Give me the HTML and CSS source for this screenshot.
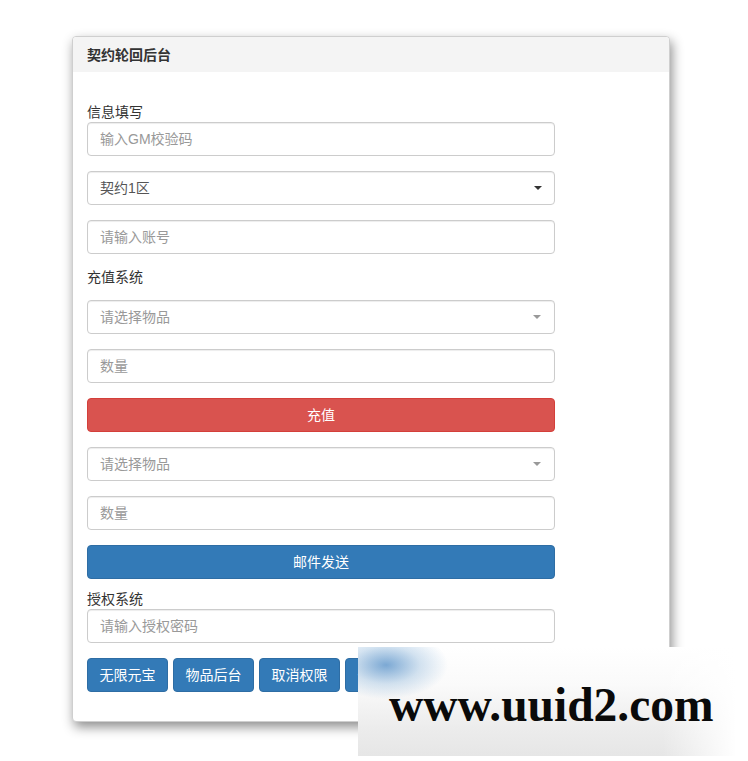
FILE: index.html
```html
<!DOCTYPE html>
<html lang="zh-CN">
<head>
<meta charset="utf-8">
<title>契约轮回后台</title>
<link rel="stylesheet" href="styles.css">
</head>
<body>
<div class="page">
  <div class="panel">
    <div class="panel-heading">契约轮回后台</div>
    <div class="panel-body">
      <form class="form">
        <div class="label">信息填写</div>
        <input class="control" type="text" placeholder="输入GM校验码">
        <div class="control select">
          <span class="value">契约1区</span>
          <span class="caret dark"></span>
        </div>
        <input class="control" type="text" placeholder="请输入账号">

        <div class="label sec">充值系统</div>
        <div class="control select">
          <span class="ph">请选择物品</span>
          <span class="caret light"></span>
        </div>
        <input class="control" type="text" placeholder="数量">
        <button type="button" class="btn btn-block btn-danger">充值</button>
        <div class="control select">
          <span class="ph">请选择物品</span>
          <span class="caret light"></span>
        </div>
        <input class="control" type="text" placeholder="数量">
        <button type="button" class="btn btn-block btn-primary">邮件发送</button>

        <div class="label sec3">授权系统</div>
        <input class="control" type="text" placeholder="请输入授权密码">
        <div class="btn-row">
          <button type="button" class="btn btn-primary">无限元宝</button>
          <button type="button" class="btn btn-primary">物品后台</button>
          <button type="button" class="btn btn-primary">取消权限</button>
          <button type="button" class="btn btn-primary">一键清理</button>
        </div>
      </form>
    </div>
  </div>
  <div class="watermark"><span>www.uuid2.com</span></div>
</div>
</body>
</html>
```

FILE: styles.css
```css
* { box-sizing: border-box; }
html, body { margin: 0; padding: 0; background: #fff; }
body {
  font-family: "Liberation Sans", "Noto Sans CJK SC", sans-serif;
  font-size: 14px;
  color: #333;
}
.page {
  position: relative;
  width: 748px;
  height: 761px;
  padding: 36px 0 0 72px;
}
.panel {
  width: 598px;
  background: #fff;
  border: 1px solid #cfcfcf;
  border-radius: 4px;
  box-shadow: 2px 5px 12px rgba(0, 0, 0, 0.45);
}
.panel-heading {
  height: 35px;
  display: flex;
  align-items: center;
  padding: 0 15px 1px 14px;
  background: #f4f4f4;
  font-weight: bold;
  font-size: 14px;
  color: #333;
  border-radius: 3px 3px 0 0;
}
.panel-body {
  padding: 15px 15px 15px 14px;
}
.form {
  width: 468px;
  padding-top: 15px;
  margin: 0;
}
.label {
  line-height: 20px;
  height: 20px;
  font-size: 14px;
  color: #333;
}
.label.sec { margin-top: -2px; margin-bottom: 13px; }
.label.sec3 { margin-top: -5px; }
.control {
  display: block;
  width: 100%;
  height: 34px;
  margin: 0 0 15px 0;
  padding: 6px 12px;
  font: inherit;
  font-size: 14px;
  line-height: 20px;
  color: #555;
  background: #fff;
  border: 1px solid #ccc;
  border-radius: 4px;
  box-shadow: inset 0 1px 1px rgba(0, 0, 0, 0.075);
  outline: none;
}
.control::placeholder { color: #999; }
.select {
  display: flex;
  align-items: center;
  justify-content: space-between;
  padding-right: 12px;
}
.select .ph { color: #999; }
.select .value { color: #555; }
.caret {
  width: 0;
  height: 0;
  border-left: 4px solid transparent;
  border-right: 4px solid transparent;
}
.caret.dark { border-top: 4px solid #333; margin-right: 0; }
.caret.light { border-top: 4px solid #999; margin-right: 1px; }
.btn {
  display: inline-block;
  height: 34px;
  padding: 6px 12px;
  font: inherit;
  font-size: 14px;
  line-height: 20px;
  color: #fff;
  border: 1px solid transparent;
  border-radius: 4px;
  text-align: center;
  white-space: nowrap;
  cursor: pointer;
}
.btn-block {
  display: block;
  width: 100%;
  margin-bottom: 15px;
}
.btn-row .btn { padding: 6px 11px; width: 81px; }
.btn-danger { background: #d9534f; border-color: #d43f3a; }
.btn-primary { background: #337ab7; border-color: #2e6da4; }
.btn-row {
  display: flex;
  gap: 5px;
  margin-bottom: 14px;
}
.watermark {
  position: absolute;
  left: 358px;
  top: 647px;
  width: 390px;
  height: 109px;
  background:
    radial-gradient(ellipse 62px 34px at 28px 18px, rgba(80, 140, 198, 0.75), rgba(130, 175, 215, 0.35) 55%, rgba(255, 255, 255, 0) 100%),
    linear-gradient(to right, rgba(255, 255, 255, 0) 0%, rgba(255, 255, 255, 0) 78%, #fff 97%),
    linear-gradient(to bottom, #fff 0%, #fafafa 35%, #ececec 75%, #e6e6e6 100%);
}
.watermark span {
  position: absolute;
  left: 31px;
  top: 35px;
  font-family: "Liberation Serif", serif;
  font-weight: bold;
  font-size: 47.5px;
  line-height: 47px;
  color: #0a0a0a;
  white-space: nowrap;
}
```
